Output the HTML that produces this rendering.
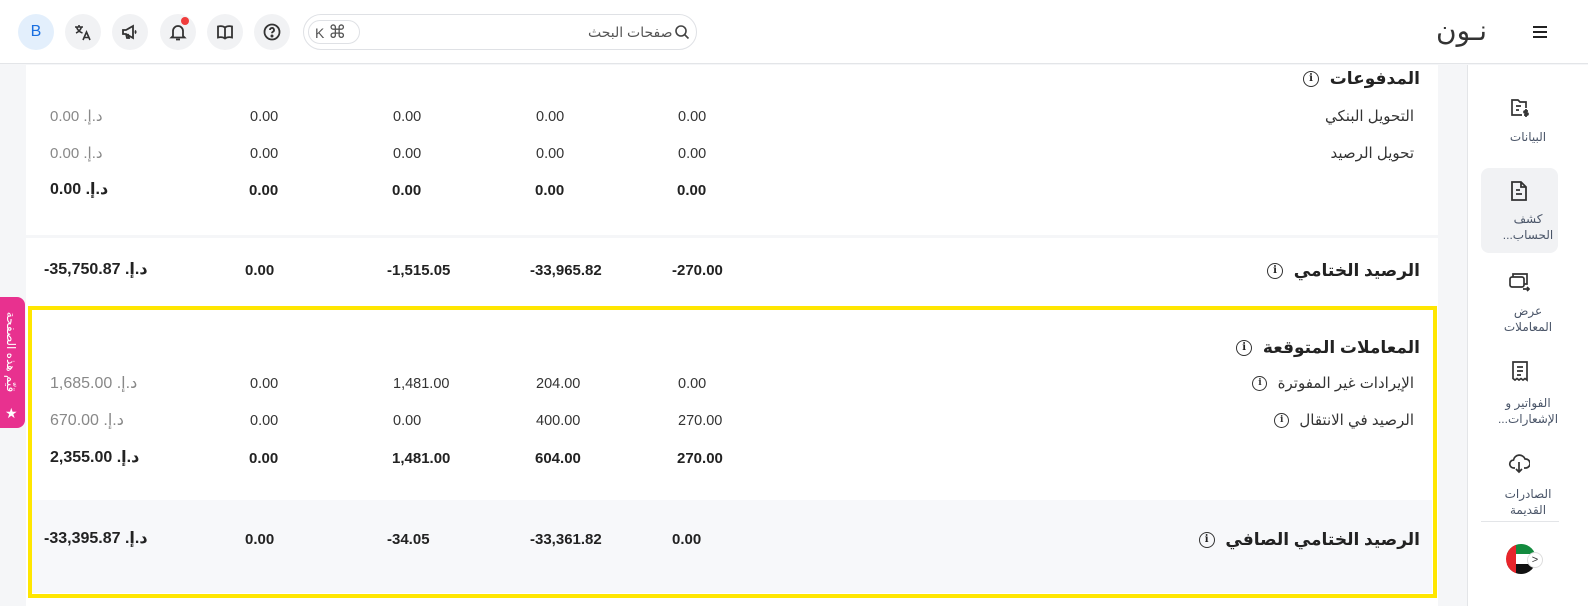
<!DOCTYPE html>
<html><head><meta charset="utf-8">
<style>
*{margin:0;padding:0;box-sizing:border-box}
body{width:1588px;height:606px;overflow:hidden;background:#f5f6f8;font-family:"Liberation Sans","DejaVu Sans",sans-serif;color:#2a2a2a;position:relative}
.a{position:absolute;white-space:nowrap;line-height:20px}
.n{font-size:14.5px;color:#333}
.g{font-size:15px;color:#888}
.b{font-size:15px;font-weight:bold;color:#222}
.lbl{font-size:15px;color:#333;direction:rtl}
.h{font-size:17px;font-weight:bold;color:#222;direction:rtl}
.cir{position:absolute;width:36px;height:36px;border-radius:50%;background:#f1f2f4;display:flex;align-items:center;justify-content:center}
.sl{position:absolute;width:120px;left:1468px;text-align:center;font-size:12px;color:#4a5568;line-height:16px;direction:rtl}
.ic{position:absolute}
.info{display:inline-block;width:16px;height:16px;border:1.6px solid #333;border-radius:50%;font-size:10px;line-height:13px;text-align:center;font-weight:bold;vertical-align:middle;position:relative;top:-1px;font-family:"DejaVu Serif",serif;margin-right:6px}
</style></head><body>
<!-- top bar -->
<div style="position:absolute;left:0;top:0;width:1588px;height:64px;background:#fff;border-bottom:1px solid #e3e5e8"></div>
<div class="cir" style="left:18px;top:14px;background:#e3effc;color:#1a6fe0;font-size:16px">B</div>
<div class="cir" style="left:65px;top:14px"><svg width="20" height="20" viewBox="0 0 20 20" fill="none" stroke="#333" stroke-width="1.6"><path d="M2 5h8M6 3v2M3.5 5c1 3 3 5 6 6M8.5 5c-1 3-3 5-5.5 6"/><path d="M10 18l3.5-8 3.5 8M11.2 15.5h4.6"/></svg></div>
<div class="cir" style="left:112px;top:14px"><svg width="20" height="20" viewBox="0 0 20 20" fill="none" stroke="#333" stroke-width="1.8"><path d="M3 8h3l7-4v12l-7-4H3z M6 12l1 4h2l-1-4M15 8.5a2 2 0 010 3"/></svg></div>
<div class="cir" style="left:160px;top:14px"><svg width="20" height="20" viewBox="0 0 20 20" fill="none" stroke="#333" stroke-width="1.8"><path d="M5 14V9a5 5 0 0110 0v5l1.5 1.5h-13zM8 17.5h4"/></svg><div style="position:absolute;left:21px;top:3px;width:8px;height:8px;border-radius:50%;background:#f03c3c"></div></div>
<div class="cir" style="left:207px;top:14px"><svg width="20" height="20" viewBox="0 0 20 20" fill="none" stroke="#333" stroke-width="1.8"><path d="M10 5.5C8 4 5 4 3 4.5v11c2-.5 5-.5 7 1 2-1.5 5-1.5 7-1v-11C15 4 12 4 10 5.5zM10 5.5v11"/></svg></div>
<div class="cir" style="left:254px;top:14px"><svg width="20" height="20" viewBox="0 0 20 20" fill="none" stroke="#333" stroke-width="1.8"><circle cx="10" cy="10" r="7.5"/><path d="M8 8a2 2 0 113 1.7c-.7.4-1 .8-1 1.6"/><circle cx="10" cy="14" r=".6" fill="#333"/></svg></div>
<div style="position:absolute;left:303px;top:14px;width:394px;height:36px;border:1px solid #dfe1e5;border-radius:18px;background:#fff"></div>
<div style="position:absolute;left:308px;top:20px;width:52px;height:24px;border:1px solid #dfe1e5;border-radius:12px;font-size:14px;color:#555;line-height:22px;padding-left:6px">K <span style="font-size:18px">⌘</span></div>
<div class="a" style="left:588px;top:22px;font-size:14px;color:#555;direction:rtl">صفحات البحث</div>
<svg class="ic" style="left:674px;top:24px" width="16" height="16" viewBox="0 0 16 16" fill="none" stroke="#444" stroke-width="1.6"><circle cx="7" cy="7" r="5"/><path d="M11 11l3.5 3.5"/></svg>
<div class="a" style="left:1436px;top:14px;font-size:28px;color:#333;line-height:34px">نـون</div>
<svg class="ic" style="left:1533px;top:25px" width="14" height="14" viewBox="0 0 14 14" stroke="#222" stroke-width="2"><path d="M0 2h14M0 7h14M0 12h14"/></svg>

<!-- sidebar -->
<div style="position:absolute;left:1467px;top:65px;width:121px;height:541px;background:#fff;border-left:1px solid #e3e5e8"></div>
<svg class="ic" style="left:1509px;top:97px" width="22" height="22" viewBox="0 0 22 22" fill="none" stroke="#333" stroke-width="1.7"><path d="M13 18H3V3h6l2 2h6v6M7 9h5M7 13h3M17 12v8M19 14h-3a1 1 0 000 2h2a1 1 0 010 2h-3"/></svg>
<div class="sl" style="top:129px">البيانات</div>
<div style="position:absolute;left:1481px;top:168px;width:77px;height:85px;background:#f1f2f4;border-radius:8px"></div>
<svg class="ic" style="left:1509px;top:180px" width="20" height="22" viewBox="0 0 20 22" fill="none" stroke="#333" stroke-width="1.8"><path d="M3 2h9l5 5v13H3zM7 10h4M7 14h6M12 2v5h5"/></svg>
<div class="sl" style="top:211px">كشف<br>الحساب...</div>
<svg class="ic" style="left:1508px;top:271px" width="22" height="22" viewBox="0 0 22 22" fill="none" stroke="#333" stroke-width="1.7"><rect x="2" y="6" width="14" height="10" rx="2"/><path d="M5 6V3h14v10h-3M15 18h6M19 16l2 2-2 2"/></svg>
<div class="sl" style="top:303px">عرض<br>المعاملات</div>
<svg class="ic" style="left:1510px;top:360px" width="20" height="22" viewBox="0 0 20 22" fill="none" stroke="#333" stroke-width="1.7"><path d="M3 2h14v18l-2-1.5-2 1.5-2-1.5-2 1.5-2-1.5L5 20l-2-1.5zM7 7h6M7 11h6M7 15h4"/></svg>
<div class="sl" style="top:395px">الفواتير و<br>الإشعارات...</div>
<svg class="ic" style="left:1508px;top:452px" width="22" height="22" viewBox="0 0 22 22" fill="none" stroke="#333" stroke-width="1.7"><path d="M7 16H6a4 4 0 01-.5-8A6 6 0 0117 7a4.5 4.5 0 011 9h-2M11 10v10M8 17l3 3 3-3"/></svg>
<div class="sl" style="top:486px">الصادرات<br>القديمة</div>
<div style="position:absolute;left:1481px;top:521px;width:78px;height:1px;background:#e3e5e8"></div>
<div style="position:absolute;left:1506px;top:544px;width:30px;height:30px;border-radius:50%;overflow:hidden;background:linear-gradient(#138a3e 0 33%,#fff 33% 66%,#111 66%)"><div style="width:10px;height:30px;background:#e8252b"></div></div>
<div style="position:absolute;left:1527px;top:552px;width:16px;height:16px;border-radius:50%;background:#fff;border:1px solid #ddd;font-size:11px;line-height:14px;text-align:center;color:#333">&gt;</div>

<!-- cards -->
<div style="position:absolute;left:26px;top:65px;width:1412px;height:170px;background:#fff"></div>
<div style="position:absolute;left:26px;top:238px;width:1412px;height:70px;background:#fff"></div>
<div style="position:absolute;left:26px;top:306px;width:1412px;height:300px;background:#fff"></div>
<div style="position:absolute;left:32px;top:500px;width:1400px;height:93px;background:#f7f8fa"></div>
<div style="position:absolute;left:28px;top:306px;width:1409px;height:292px;border:4px solid #ffe600"></div>

<!-- card 1 -->
<div class="a h" style="right:168px;top:69px">المدفوعات <span class="info">i</span></div>
<div class="a lbl" style="right:174px;top:107px">التحويل البنكي</div>
<div class="a lbl" style="right:174px;top:144px">تحويل الرصيد</div>
<div class="a n" style="left:678px;top:107px">0.00</div><div class="a n" style="left:536px;top:107px">0.00</div><div class="a n" style="left:393px;top:107px">0.00</div><div class="a n" style="left:250px;top:107px">0.00</div><div class="a g" style="left:50px;top:107px">0.00 .د.إ</div>
<div class="a n" style="left:678px;top:144px">0.00</div><div class="a n" style="left:536px;top:144px">0.00</div><div class="a n" style="left:393px;top:144px">0.00</div><div class="a n" style="left:250px;top:144px">0.00</div><div class="a g" style="left:50px;top:144px">0.00 .د.إ</div>
<div class="a b" style="left:677px;top:181px">0.00</div><div class="a b" style="left:535px;top:181px">0.00</div><div class="a b" style="left:392px;top:181px">0.00</div><div class="a b" style="left:249px;top:181px">0.00</div><div class="a b" style="left:50px;top:180px;font-size:16px">0.00 .د.إ</div>

<!-- closing -->
<div class="a h" style="right:168px;top:261px">الرصيد الختامي <span class="info">i</span></div>
<div class="a b" style="left:672px;top:261px">-270.00</div><div class="a b" style="left:530px;top:261px">-33,965.82</div><div class="a b" style="left:387px;top:261px">-1,515.05</div><div class="a b" style="left:245px;top:261px">0.00</div><div class="a b" style="left:44px;top:260px;font-size:16px">-35,750.87 .د.إ</div>

<!-- expected -->
<div class="a h" style="right:168px;top:338px">المعاملات المتوقعة <span class="info">i</span></div>
<div class="a lbl" style="right:174px;top:374px">الإيرادات غير المفوترة <span class="info" style="width:15px;height:15px;font-size:9px;line-height:12px;top:-1px">i</span></div>
<div class="a lbl" style="right:174px;top:411px">الرصيد في الانتقال <span class="info" style="width:15px;height:15px;font-size:9px;line-height:12px;top:-1px">i</span></div>
<div class="a n" style="left:678px;top:374px">0.00</div><div class="a n" style="left:536px;top:374px">204.00</div><div class="a n" style="left:393px;top:374px">1,481.00</div><div class="a n" style="left:250px;top:374px">0.00</div><div class="a g" style="left:50px;top:374px;font-size:16px">1,685.00 .د.إ</div>
<div class="a n" style="left:678px;top:411px">270.00</div><div class="a n" style="left:536px;top:411px">400.00</div><div class="a n" style="left:393px;top:411px">0.00</div><div class="a n" style="left:250px;top:411px">0.00</div><div class="a g" style="left:50px;top:411px;font-size:16px">670.00 .د.إ</div>
<div class="a b" style="left:677px;top:449px">270.00</div><div class="a b" style="left:535px;top:449px">604.00</div><div class="a b" style="left:392px;top:449px">1,481.00</div><div class="a b" style="left:249px;top:449px">0.00</div><div class="a b" style="left:50px;top:448px;font-size:16px">2,355.00 .د.إ</div>

<div class="a h" style="right:168px;top:530px">الرصيد الختامي الصافي <span class="info">i</span></div>
<div class="a b" style="left:672px;top:530px">0.00</div><div class="a b" style="left:530px;top:530px">-33,361.82</div><div class="a b" style="left:387px;top:530px">-34.05</div><div class="a b" style="left:245px;top:530px">0.00</div><div class="a b" style="left:44px;top:529px;font-size:16px">-33,395.87 .د.إ</div>

<!-- feedback tab -->
<div style="position:absolute;left:0;top:297px;width:25px;height:131px;background:#e8318f;border-radius:0 8px 8px 0"></div>
<div class="a" style="left:-44px;top:342px;width:110px;height:20px;transform:rotate(90deg);color:#fff;font-size:12px;text-align:center;direction:rtl">قيّم هذه الصفحة</div>
<div class="a" style="left:5px;top:403px;color:#fff;font-size:14px">★</div>
</body></html>
